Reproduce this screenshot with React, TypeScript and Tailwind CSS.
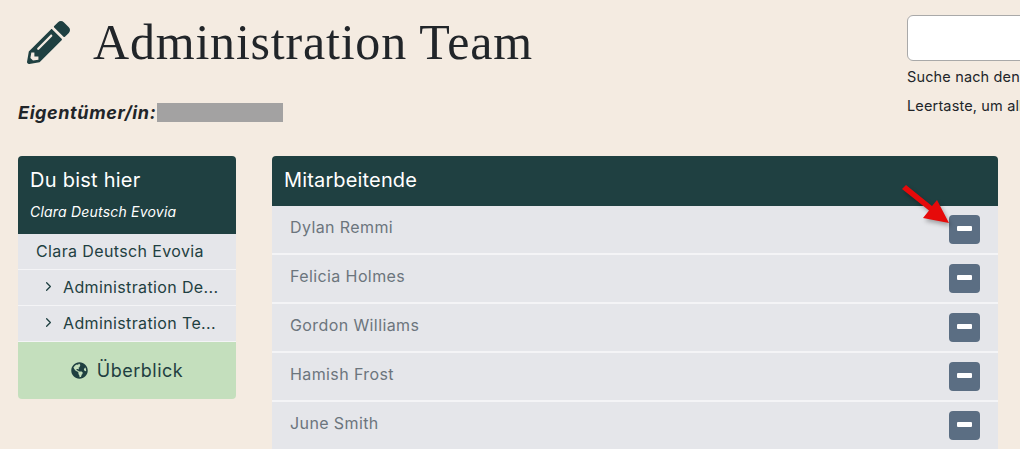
import React from 'react';
import { FaPencilAlt, FaGlobeAmericas } from 'react-icons/fa';
import { LuChevronRight } from 'react-icons/lu';

const staff = ['Dylan Remmi', 'Felicia Holmes', 'Gordon Williams', 'Hamish Frost', 'June Smith'];
const sans = { fontFamily: 'Inter, sans-serif' };

const RedArrow = () => (
  <svg className="absolute left-[898px] top-[180px] drop-shadow-[2px_3px_2px_rgba(0,0,0,0.3)]" width="56" height="46" viewBox="0 0 56 46">
    <path d="M4 9 L8 5 L34 26 L39 20 L51 43 L25 38 L31 30.5 Z" fill="#e60a0a" />
  </svg>
);

export default function App() {
  return (
    <div className="relative h-[449px] w-[1020px] overflow-hidden bg-[#f4ebe1] text-[#212529]" style={sans}>
      <header className="flex h-[156px] items-start">
        <div className="w-[907px] shrink-0 pl-[18px]">
          <div className="flex h-[84px] items-center pl-[9px]">
            <FaPencilAlt className="text-[43px] text-[#1f4041]" />
            <h1 className="ml-[23px] font-['Liberation_Serif',serif] text-[50px] leading-none tracking-[0.8px]">Administration Team</h1>
          </div>
          <p className="mt-[19px] flex h-[19px] items-center text-[18px] font-bold italic tracking-[0.6px]">
            Eigentümer/in:
            <span className="ml-[1px] inline-block h-[19px] w-[126px] bg-[#a3a2a2]" />
          </p>
        </div>
        <div className="w-[300px] shrink-0 pt-[15px]">
          <input className="block h-[46px] w-[300px] rounded-md border border-[#a9a9a9] bg-white" />
          <p className="mt-[5px] text-[14.5px] leading-[22px] tracking-[0.15px]">Suche nach den Mitarbeitenden</p>
          <p className="mt-[7px] text-[14.5px] leading-[22px] tracking-[0.15px]">Leertaste, um alle anzuzeigen</p>
        </div>
      </header>

      <main className="flex items-start pl-[18px]">
        <aside className="w-[218px] overflow-hidden rounded-[4px]">
          <div className="h-[78px] bg-[#1f4041] px-[12px] pt-[11px] text-white">
            <h2 className="text-[20px] leading-[26px] tracking-[0.25px]">Du bist hier</h2>
            <p className="mt-[8px] text-[14px] italic leading-[22px] tracking-[0.2px]">Clara Deutsch Evovia</p>
          </div>
          <div className="flex h-[36px] items-center border-b border-[#f4f4f6] bg-[#e5e6ea] pb-[2px] pl-[18px] text-[16px] tracking-[0.37px] text-[#1f4041]">Clara Deutsch Evovia</div>
          <div className="flex h-[36px] items-center border-b border-[#f4f4f6] bg-[#e5e6ea] pb-[2px] pl-[23px] text-[16px] tracking-[0.37px] text-[#1f4041]">
            <LuChevronRight className="mr-[7px] shrink-0 text-[15px]" />
            Administration De...
          </div>
          <div className="flex h-[36px] items-center border-b border-[#f4f4f6] bg-[#e5e6ea] pb-[2px] pl-[23px] text-[16px] tracking-[0.37px] text-[#1f4041]">
            <LuChevronRight className="mr-[7px] shrink-0 text-[15px]" />
            Administration Te...
          </div>
          <div className="flex h-[57px] items-center justify-center gap-[9px] bg-[#c4dfbd] pb-[1px] text-[18px] tracking-[0.5px] text-[#1f4041]">
            <FaGlobeAmericas className="text-[17px]" />
            Überblick
          </div>
        </aside>

        <section className="ml-[36px] w-[726px]">
          <div className="flex h-[50px] items-center rounded-t-[4px] bg-[#1f4041] px-[12px] pb-[2px] text-[20px] tracking-[0.15px] text-white">Mitarbeitende</div>
          {staff.map((name) => (
            <div key={name} className="flex h-[49px] items-center justify-between border-b-2 border-[#f4f4f6] bg-[#e5e6ea] pl-[18px] pr-[18px] text-[16px] tracking-[0.4px] text-[#6c757d]">
              <span className="-mt-[6px]">{name}</span>
              <button className="flex h-[29px] w-[31px] items-center justify-center rounded-[4px] bg-[#5b6e83] pb-[2px]">
                <span className="h-[5px] w-[15px] rounded-[1px] bg-white" />
              </button>
            </div>
          ))}
        </section>
      </main>
      <RedArrow />
    </div>
  );
}
